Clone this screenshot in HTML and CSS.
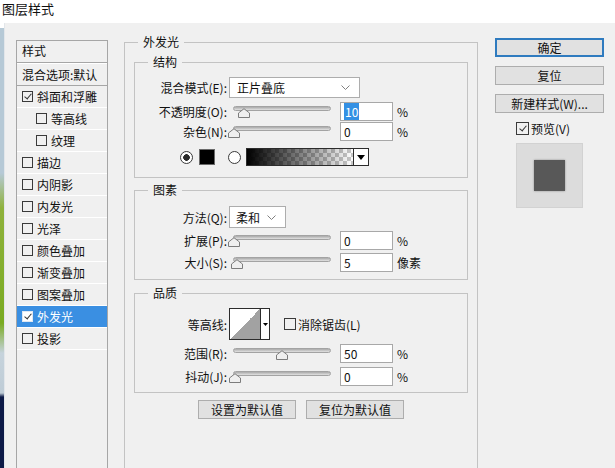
FILE: index.html
```html
<!DOCTYPE html>
<html lang="zh-CN">
<head>
<meta charset="utf-8">
<title>图层样式</title>
<link rel="stylesheet" href="styles.css">
</head>
<body>
<div class="titlebar">图层样式</div>
<div class="main">
  <div class="desk"></div>
  <div class="dialog">
    <div class="styles">
      <div class="head">样式</div>
      <div class="blend">混合选项:默认</div>
      <ul class="items">
        <li><span class="cb on"></span>斜面和浮雕</li>
        <li class="sub"><span class="cb"></span>等高线</li>
        <li class="sub"><span class="cb"></span>纹理</li>
        <li><span class="cb"></span>描边</li>
        <li><span class="cb"></span>内阴影</li>
        <li><span class="cb"></span>内发光</li>
        <li><span class="cb"></span>光泽</li>
        <li><span class="cb"></span>颜色叠加</li>
        <li><span class="cb"></span>渐变叠加</li>
        <li><span class="cb"></span>图案叠加</li>
        <li class="active"><span class="cb on"></span>外发光</li>
        <li><span class="cb"></span>投影</li>
      </ul>
    </div>

    <fieldset class="frame">
      <legend>外发光</legend>

      <fieldset class="group g-struct">
        <legend>结构</legend>
        <div class="row r-mode">
          <span class="lbl">混合模式(E):</span>
          <div class="select w-mode"><span>正片叠底</span><svg class="chev" width="9" height="5" viewBox="0 0 9 5"><polyline points="0.5,0.5 4.5,4.5 8.5,0.5" fill="none" stroke="#808080"/></svg></div>
        </div>
        <div class="row r-gap3">
          <span class="lbl">不透明度(O):</span>
          <div class="slider"><span class="groove"></span><svg class="thumb" style="left:5px" width="12" height="10" viewBox="0 0 12 10"><path d="M0.5 9.5V5L6 0.7 11.5 5v4.5z" fill="#efefef" stroke="#7c7c7c"/></svg></div>
          <div class="field"><span class="sel">10</span></div>
          <span class="unit">%</span>
        </div>
        <div class="row">
          <span class="lbl">杂色(N):</span>
          <div class="slider"><span class="groove"></span><svg class="thumb" style="left:-5px" width="12" height="10" viewBox="0 0 12 10"><path d="M0.5 9.5V5L6 0.7 11.5 5v4.5z" fill="#efefef" stroke="#7c7c7c"/></svg></div>
          <div class="field">0</div>
          <span class="unit">%</span>
        </div>
        <div class="row r-swatch">
          <span class="radio on"></span>
          <span class="swatch"></span>
          <span class="radio r2"></span>
          <div class="grad"><span class="gfill"></span><span class="gdrop"><svg width="8" height="5" viewBox="0 0 8 5"><path d="M0 0h8L4 5z" fill="#000"/></svg></span></div>
        </div>
      </fieldset>

      <fieldset class="group g-elem">
        <legend>图素</legend>
        <div class="row r-method">
          <span class="lbl">方法(Q):</span>
          <div class="select w-method"><span>柔和</span><svg class="chev" width="9" height="5" viewBox="0 0 9 5"><polyline points="0.5,0.5 4.5,4.5 8.5,0.5" fill="none" stroke="#808080"/></svg></div>
        </div>
        <div class="row r-gap2">
          <span class="lbl">扩展(P):</span>
          <div class="slider"><span class="groove"></span><svg class="thumb" style="left:-5px" width="12" height="10" viewBox="0 0 12 10"><path d="M0.5 9.5V5L6 0.7 11.5 5v4.5z" fill="#efefef" stroke="#7c7c7c"/></svg></div>
          <div class="field">0</div>
          <span class="unit">%</span>
        </div>
        <div class="row r-gap2">
          <span class="lbl">大小(S):</span>
          <div class="slider"><span class="groove"></span><svg class="thumb" style="left:-2px" width="12" height="10" viewBox="0 0 12 10"><path d="M0.5 9.5V5L6 0.7 11.5 5v4.5z" fill="#efefef" stroke="#7c7c7c"/></svg></div>
          <div class="field">5</div>
          <span class="unit">像素</span>
        </div>
      </fieldset>

      <fieldset class="group g-qual">
        <legend>品质</legend>
        <div class="row r-contour">
          <span class="lbl">等高线:</span>
          <div class="contour"><span class="cgraph"></span><span class="cdrop"><svg width="5" height="3" viewBox="0 0 5 3"><path d="M0 0h5L2.5 3z" fill="#000"/></svg></span></div>
          <span class="cb aa"></span><span>消除锯齿(L)</span>
        </div>
        <div class="row r-gap3">
          <span class="lbl">范围(R):</span>
          <div class="slider"><span class="groove"></span><svg class="thumb" style="left:43px" width="12" height="10" viewBox="0 0 12 10"><path d="M0.5 9.5V5L6 0.7 11.5 5v4.5z" fill="#efefef" stroke="#7c7c7c"/></svg></div>
          <div class="field">50</div>
          <span class="unit">%</span>
        </div>
        <div class="row r-gap3">
          <span class="lbl">抖动(J):</span>
          <div class="slider"><span class="groove"></span><svg class="thumb" style="left:-4px" width="12" height="10" viewBox="0 0 12 10"><path d="M0.5 9.5V5L6 0.7 11.5 5v4.5z" fill="#efefef" stroke="#7c7c7c"/></svg></div>
          <div class="field">0</div>
          <span class="unit">%</span>
        </div>
      </fieldset>

      <div class="defaults">
        <div class="btn wide">设置为默认值</div>
        <div class="btn wide">复位为默认值</div>
      </div>
    </fieldset>

    <div class="actions">
      <div class="btn default">确定</div>
      <div class="btn">复位</div>
      <div class="btn">新建样式(W)...</div>
      <div class="pv"><span class="cb on big"></span><span>预览(V)</span></div>
      <div class="pbox"><span class="psq"></span></div>
    </div>
  </div>
</div>
</body>
</html>
```

FILE: styles.css
```css
* { box-sizing: border-box; }
html, body { margin: 0; padding: 0; }
body {
  width: 615px;
  height: 468px;
  overflow: hidden;
  background: #f0f0f0;
  font-family: "Noto Sans CJK SC", "Noto Sans", sans-serif;
  font-size: 12px;
  color: #111;
}

.titlebar {
  height: 23px;
  background: #fff;
  padding-left: 2px;
  font-size: 13px;
  line-height: 17px;
}

.main { display: flex; height: 445px; overflow: hidden; }
.desk {
  flex: none;
  width: 4px;
  background: linear-gradient(to bottom, #ffffff 0 5px, #b6c9d6 5px 150px, #8fb23c 185px, #7aab22 300px, #c6d3dc 330px, #bfccd6 370px, #0d1a47 374px);
}
.dialog {
  flex: 1;
  display: flex;
  align-items: flex-start;
  border-left: 1px solid #e2e6ea;
  padding-left: 11px;
}

/* styles list */
.styles {
  flex: none;
  width: 92px;
  height: 428px;
  margin-top: 17px;
  border: 1px solid #a6a6a6;
  border-bottom: none;
}
.head {
  height: 22px;
  line-height: 20px;
  padding-left: 5px;
  border-bottom: 1px solid #a6a6a6;
}
.blend {
  height: 23px;
  line-height: 21px;
  padding-left: 5px;
  border-top: 1px solid #fff;
  border-bottom: 1px solid #a6a6a6;
  white-space: nowrap;
}
.items { list-style: none; margin: 0; padding: 0; }
.items li {
  height: 22px;
  display: flex;
  align-items: center;
  padding-left: 5px;
  border-bottom: 1px solid #fff;
  white-space: nowrap;
}
.items li.sub { padding-left: 19px; }
.items li.active { background: #3a8fe2; color: #fff; }
.items li.active .cb { background: #fff; border-color: #dfe8f2; }

.cb {
  flex: none;
  position: relative;
  width: 11px;
  height: 11px;
  border: 1px solid #3a3a3a;
  margin-right: 4px;
}
.cb.on::after {
  content: "";
  position: absolute;
  left: 3px;
  top: 0px;
  width: 3px;
  height: 6px;
  border: solid #333;
  border-width: 0 1.5px 1.5px 0;
  transform: rotate(40deg);
}
.cb.big { width: 13px; height: 13px; margin-right: 2px; }
.cb.big::after { left: 4px; top: 1px; }
.cb.aa { width: 12px; height: 12px; margin-left: 14px; margin-right: 2px; }

/* fieldsets */
fieldset {
  margin: 0;
  padding: 0 9px;
  border: 1px solid #c3c3c3;
  min-width: 0;
}
legend {
  margin-left: 4px;
  padding: 0 5px;
  line-height: 16px;
  font-size: 12px;
}
.frame {
  flex: none;
  width: 354px;
  height: 434px;
  margin: 11px 0 0 16px;
  border-bottom: none;
}
.group { margin-top: 4px; }
.g-struct { padding-bottom: 10px; }
.g-elem { padding-bottom: 7px; }
.g-qual { margin-top: 5px; padding-bottom: 6px; }

.row {
  display: flex;
  align-items: center;
  height: 20px;
  white-space: nowrap;
}
.r-mode { height: 21px; margin-top: 7px; }
.r-gap3 { margin-top: 3px; }
.r-gap2 { margin-top: 2px; }
.r-swatch { margin-top: 6px; padding-left: 36px; }
.r-method { height: 22px; margin-top: 8px; }
.r-contour { height: 32px; margin-top: 7px; }

.lbl {
  flex: none;
  width: 83px;
  margin-right: 2px;
  text-align: right;
}

.select {
  flex: none;
  height: 100%;
  display: flex;
  align-items: center;
  justify-content: space-between;
  background: #fff;
  border: 1px solid #adadad;
}
.w-mode { width: 131px; padding: 0 9px 0 7px; }
.w-method { width: 57px; padding: 0 9px 0 6px; }

.slider {
  flex: none;
  position: relative;
  width: 98px;
  height: 20px;
  margin-left: 4px;
}
.groove {
  position: absolute;
  left: 0;
  right: 0;
  top: 5px;
  height: 5px;
  border-radius: 3px;
  border: 1px solid #a3a3a3;
  background: linear-gradient(#a9a9a9, #e2e2e2);
}
.thumb { position: absolute; top: 7px; }

.field {
  flex: none;
  width: 53px;
  height: 19px;
  margin-left: 9px;
  padding-left: 3px;
  background: #fff;
  border: 1px solid #a8a8a8;
  line-height: 17px;
}
.sel { background: #3390e4; color: #fff; padding: 0 1px; }
.unit { margin-left: 4px; }

.radio {
  flex: none;
  width: 13px;
  height: 13px;
  border-radius: 50%;
  border: 1px solid #3a3a3a;
  background: #fff;
}
.radio.on { background: radial-gradient(circle, #2a2a2a 0 3px, #fff 3.6px); }
.radio.r2 { margin-left: 13px; }
.swatch {
  flex: none;
  width: 16px;
  height: 16px;
  margin-left: 6px;
  background: #000;
  border: 1px solid #6a6a6a;
}
.grad {
  flex: none;
  display: flex;
  width: 123px;
  height: 18px;
  margin-left: 5px;
  border: 1px solid #2c2c2c;
  background: #fff;
}
.gfill {
  width: 106px;
  background:
    linear-gradient(to right, #000, rgba(0, 0, 0, 0)),
    repeating-conic-gradient(#c8c8c8 0 25%, #ffffff 0 50%) 0 0 / 8px 8px;
}
.gdrop {
  flex: 1;
  display: flex;
  align-items: center;
  justify-content: center;
  border-left: 1px solid #2c2c2c;
}

.contour {
  flex: none;
  display: flex;
  width: 41px;
  height: 32px;
  border: 1px solid #2c2c2c;
  background: #fff;
}
.cgraph {
  width: 30px;
  background: linear-gradient(to top left, #a2a2a2 50%, #ffffff 50%);
}
.cdrop {
  flex: 1;
  display: flex;
  align-items: center;
  justify-content: center;
  border-left: 1px solid #2c2c2c;
}

.btn {
  height: 19px;
  line-height: 17px;
  text-align: center;
  background: #e1e1e1;
  border: 1px solid #adadad;
  white-space: nowrap;
}
.btn + .btn { margin-top: 9px; }
.btn.default {
  border-color: #2f7bbf;
  box-shadow: inset 0 0 0 1px #2f7bbf;
}
.defaults {
  display: flex;
  justify-content: center;
  gap: 10px;
  margin-top: 7px;
}
.defaults .btn { margin-top: 0; }
.btn.wide { width: 98px; }

.actions {
  flex: none;
  width: 109px;
  margin: 15px 0 0 17px;
  display: flex;
  flex-direction: column;
}
.pv {
  height: 16px;
  margin-top: 7px;
  padding-left: 21px;
  display: flex;
  align-items: center;
}
.pbox {
  width: 67px;
  height: 65px;
  margin: 7px 0 0 21px;
  background: #dcdcdc;
  border: 1px solid #d2d2d2;
  display: flex;
  align-items: center;
  justify-content: center;
}
.psq {
  width: 31px;
  height: 31px;
  background: #585858;
  box-shadow: 0 0 2px rgba(0, 0, 0, 0.35);
}
```
